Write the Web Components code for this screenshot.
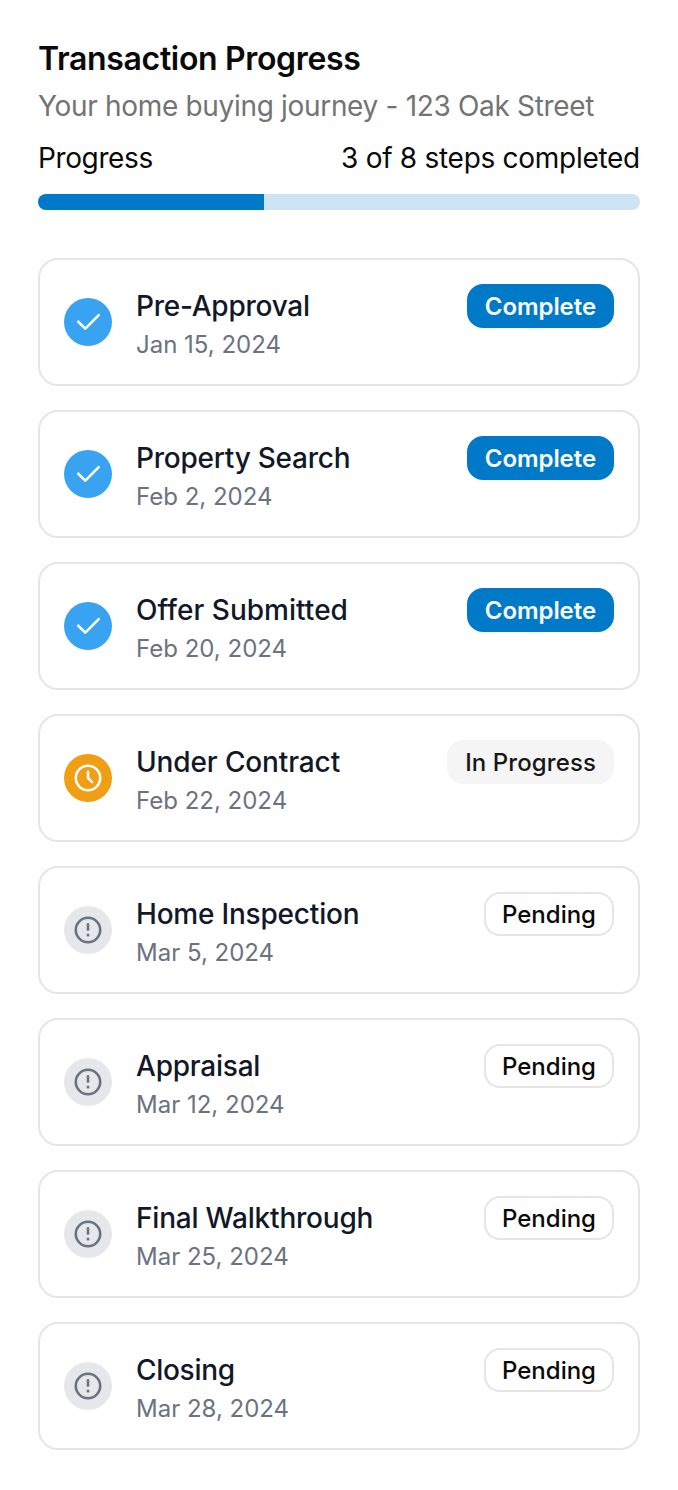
<!DOCTYPE html>
<html lang="en"><head><meta charset="utf-8"><title>Transaction Progress</title>
<style>body{margin:0;background:#fff;font-family:Inter,"Liberation Sans",sans-serif;color:#0a0a0a}</style></head><body>
<transaction-progress></transaction-progress>
<script>
class StepBadge extends HTMLElement{
  connectedCallback(){
    this.attachShadow({mode:'open'}).innerHTML=`<style>
:host{display:block;flex:none;box-sizing:border-box;height:44px;border:2px solid #e5e5e5;border-radius:16px;padding:0 16px;font-size:24px;line-height:41px;font-weight:500;white-space:nowrap;color:#0a0a0a}
:host([kind=complete]){background:#007ac8;border-color:#007ac8;color:#fafafa;font-weight:600;letter-spacing:-.08px}
:host([kind=progress]){background:#f5f5f5;border-color:#f5f5f5;color:#171717;letter-spacing:.1px}
</style><slot></slot>`;
  }
}
customElements.define('step-badge',StepBadge);
class StepIcon extends HTMLElement{
  connectedCallback(){
    const p={complete:'<path d="M-9.8-.3-2.7 6.6 10.7-6.8"/>',progress:'<circle r="12.2"/><path d="M0-6.2V0L4.2 4.2"/>',pending:'<circle r="12.2"/><path d="M0-5.7V-.4"/><circle cy="5" r="1.5" fill="currentColor" stroke="none"/>'};
    this.attachShadow({mode:'open'}).innerHTML=`<style>
:host{display:block;flex:none;width:48px;height:48px;border-radius:50%;background:#e5e7eb;color:#6b7280}
:host([kind=complete]){background:#38a3f1;color:#fff}
:host([kind=progress]){background:#f09e13;color:#fff}
svg{display:block;width:48px;height:48px;fill:none;stroke:currentColor;stroke-width:2.6;stroke-linecap:round;stroke-linejoin:round}
</style><svg viewBox="-24 -24 48 48">${p[this.getAttribute('kind')]}</svg>`;
  }
}
customElements.define('step-icon',StepIcon);
class StepCard extends HTMLElement{
  connectedCallback(){
    const k=this.getAttribute('kind');
    this.attachShadow({mode:'open'}).innerHTML=`<style>
:host{display:flex;box-sizing:border-box;height:128px;border:2px solid #e5e5e5;border-radius:20px;padding:24px;align-items:center;gap:24px}
.text{flex:1;align-self:flex-start}
.title{font-size:28px;line-height:45px;font-weight:500;color:#111827;letter-spacing:${this.getAttribute('tracking')}px}
.date{font-size:24px;line-height:32px;color:#6b7280}
step-badge{align-self:flex-start}
</style><step-icon kind="${k}"></step-icon><div class="text"><div class="title"><slot></slot></div><div class="date"><slot name="date"></slot></div></div><step-badge kind="${k}">${{complete:'Complete',progress:'In Progress',pending:'Pending'}[k]}</step-badge>`;
  }
}
customElements.define('step-card',StepCard);
class TransactionProgress extends HTMLElement{
  connectedCallback(){
    const steps=[['Pre-Approval','Jan 15, 2024','complete',-.24],['Property Search','Feb 2, 2024','complete',-.24],['Offer Submitted','Feb 20, 2024','complete',.03],['Under Contract','Feb 22, 2024','progress',-.12],['Home Inspection','Mar 5, 2024','pending',-.2],['Appraisal','Mar 12, 2024','pending',-.22],['Final Walkthrough','Mar 25, 2024','pending',-.2],['Closing','Mar 28, 2024','pending',-.3]];
    this.attachShadow({mode:'open'}).innerHTML=`<style>
:host{display:block;box-sizing:border-box;height:1490px;padding:38px 38px 0}
h1{margin:0;font-size:32px;line-height:42px;font-weight:600;letter-spacing:-.34px}
p{margin:6px 0 0;font-size:28px;line-height:40px;color:#737373;letter-spacing:-.32px}
.row{display:flex;justify-content:space-between;margin-top:12px;font-size:28px;line-height:40px;letter-spacing:-.28px}
.row span:first-child{letter-spacing:-.38px}
.bar{height:16px;margin-top:16px;border-radius:8px;background:#cce4f4;overflow:hidden}
.bar div{height:100%;width:37.5%;background:#007ac8}
.list{display:grid;gap:24px;margin-top:48px}
</style><h1>Transaction Progress</h1><p>Your home buying journey - 123 Oak Street</p><div class="row"><span>Progress</span><span>3 of 8 steps completed</span></div><div class="bar"><div></div></div><div class="list">${steps.map(s=>`<step-card kind="${s[2]}" tracking="${s[3]}">${s[0]}<span slot="date">${s[1]}</span></step-card>`).join('')}</div>`;
  }
}
customElements.define('transaction-progress',TransactionProgress);
</script></body></html>
